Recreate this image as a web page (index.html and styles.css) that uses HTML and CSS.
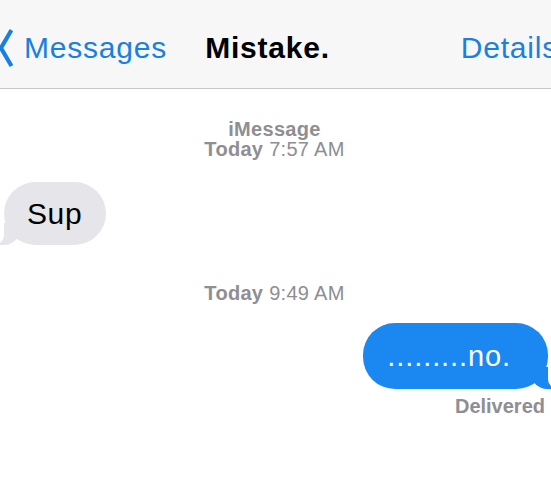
FILE: index.html
```html
<html>
    <head>
        <title>Mistake.</title>
        <link rel="stylesheet" href="styles.css">
    </head>
    <body>
        <div class="phone">
            <div class="navbar">
                <a class="back" href="#">
                    <svg class="chevron" width="14" height="40" viewBox="0 0 14 40">
                        <path d="M12.5 2 L2 20 L12.5 38" fill="none" stroke="#1a80e0" stroke-width="4.2" stroke-linecap="butt" stroke-linejoin="miter"/>
                    </svg>
                    <span>Messages</span>
                </a>
                <div class="title">Mistake.</div>
                <a class="details" href="#">Details</a>
            </div>
            <div class="chat">
                <div class="stamp first">
                    <div><b>iMessage</b></div>
                    <div><b>Today</b> 7:57 AM</div>
                </div>
                <div class="row left">
                    <div class="bubble them">Sup</div>
                </div>
                <div class="stamp second">
                    <div><b>Today</b> 9:49 AM</div>
                </div>
                <div class="row right">
                    <div class="bubble me">.........no.</div>
                </div>
                <div class="status">Delivered</div>
            </div>
        </div>
    </body>
</html>
```

FILE: styles.css
```css
body{
    margin: 0;
    font-family: "Liberation Sans", Arial, Helvetica, sans-serif;
    background-color: white;
}
.phone{
    width: 551px;
    height: 500px;
    overflow: hidden;
}
.navbar{
    display: flex;
    align-items: center;
    height: 80px;
    padding-top: 8px;
    background-color: #f7f7f7;
    border-bottom: 1px solid #c6c6c8;
    font-size: 30px;
    letter-spacing: 0.8px;
    white-space: nowrap;
}
.navbar a{
    color: #1a80e0;
    text-decoration: none;
}
.back{
    display: flex;
    align-items: center;
}
.chevron{
    margin-left: -1px;
    margin-right: 11px;
}
.title{
    margin-left: 38px;
    font-weight: bold;
    color: black;
}
.details{
    margin-left: auto;
    margin-right: -7px;
}
.chat{
    display: flex;
    flex-direction: column;
}
.stamp{
    text-align: center;
    color: #8e8e93;
    font-size: 20px;
    line-height: 20px;
    letter-spacing: 0.3px;
    padding-right: 2px;
}
.stamp.first{
    margin-top: 30px;
}
.stamp.second{
    margin-top: 38px;
}
.row{
    display: flex;
}
.row.left{
    margin-top: 23px;
    padding-left: 4px;
}
.row.right{
    justify-content: flex-end;
    margin-top: 20px;
    padding-right: 3px;
}
.bubble{
    position: relative;
    border-radius: 32px;
}
.bubble.them{
    height: 63px;
    line-height: 63px;
    padding: 0 24px 0 23px;
    font-size: 30px;
    letter-spacing: 0.6px;
    background-color: #e5e5ea;
    color: black;
}
.bubble.me{
    height: 66px;
    line-height: 66px;
    padding: 0 37px 0 24px;
    font-size: 29px;
    letter-spacing: 0.9px;
    background-color: #1b87f0;
    color: white;
}
/* little tails under the bubbles */
.bubble.them::before{
    content: "";
    position: absolute;
    left: -6px;
    bottom: 0;
    width: 22px;
    height: 22px;
    background-color: #e5e5ea;
    border-bottom-right-radius: 16px;
}
.bubble.them::after{
    content: "";
    position: absolute;
    left: -12px;
    bottom: 0;
    width: 12px;
    height: 22px;
    background-color: white;
    border-bottom-right-radius: 10px;
}
.bubble.me::before{
    content: "";
    position: absolute;
    right: -5px;
    bottom: 0;
    width: 22px;
    height: 22px;
    background-color: #1b87f0;
    border-bottom-left-radius: 16px;
}
.bubble.me::after{
    content: "";
    position: absolute;
    right: -12px;
    bottom: 0;
    width: 12px;
    height: 22px;
    background-color: white;
    border-bottom-left-radius: 10px;
}
.status{
    align-self: flex-end;
    margin-top: 7px;
    margin-right: 6px;
    font-size: 20px;
    line-height: 20px;
    font-weight: bold;
    color: #8e8e93;
}
```
